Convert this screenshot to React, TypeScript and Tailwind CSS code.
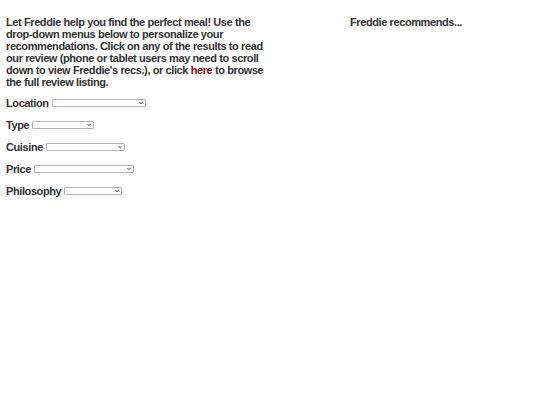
import React from "react";

const filters = [
  { label: "Location", width: "w-[94px]" },
  { label: "Type", width: "w-[62px]" },
  { label: "Cuisine", width: "w-[79px]" },
  { label: "Price", width: "w-[100px]" },
  { label: "Philosophy", width: "w-[58px]" },
];

function TinySelect({ width }: { width: string }) {
  return (
    <span className={`relative inline-flex h-[8px] ${width} items-center`}>
      <select className="h-full w-full appearance-none rounded-[1px] border border-[#b4b4b4] bg-white p-0 text-[6px] leading-none outline-none">
        <option value=""></option>
      </select>
      <svg
        className="pointer-events-none absolute right-[3px] top-1/2 -translate-y-1/2"
        width="4"
        height="3"
        viewBox="0 0 4 3"
      >
        <path d="M0.5 0.5 L2 2.2 L3.5 0.5" fill="none" stroke="#333" strokeWidth="0.9" />
      </svg>
    </span>
  );
}

export default function App() {
  return (
    <div
      className="flex min-h-[405px] w-[540px] bg-white px-[6px] pt-[16px] text-[11px] font-bold leading-[12px] tracking-[-0.4px] text-[#333]"
      style={{ fontFamily: '"Liberation Sans", Arial, sans-serif' }}
    >
      <div className="w-[262px] shrink-0">
        <p>
          Let Freddie help you find the perfect meal! Use the drop-down menus below to
          personalize your recommendations. Click on any of the results to read our review
          (phone or tablet users may need to scroll down to view Freddie's recs.), or click{" "}
          <a className="text-[#8b0a0a]" href="#">
            here
          </a>{" "}
          to browse the full review listing.
        </p>
        <div className="mt-[9px] flex flex-col gap-[10px]">
          {filters.map((f) => (
            <div key={f.label} className="flex h-[12px] items-center gap-[3px]">
              <span>{f.label}</span>
              <TinySelect width={f.width} />
            </div>
          ))}
        </div>
      </div>
      <div className="ml-[82px]">
        <h2>Freddie recommends...</h2>
      </div>
    </div>
  );
}
